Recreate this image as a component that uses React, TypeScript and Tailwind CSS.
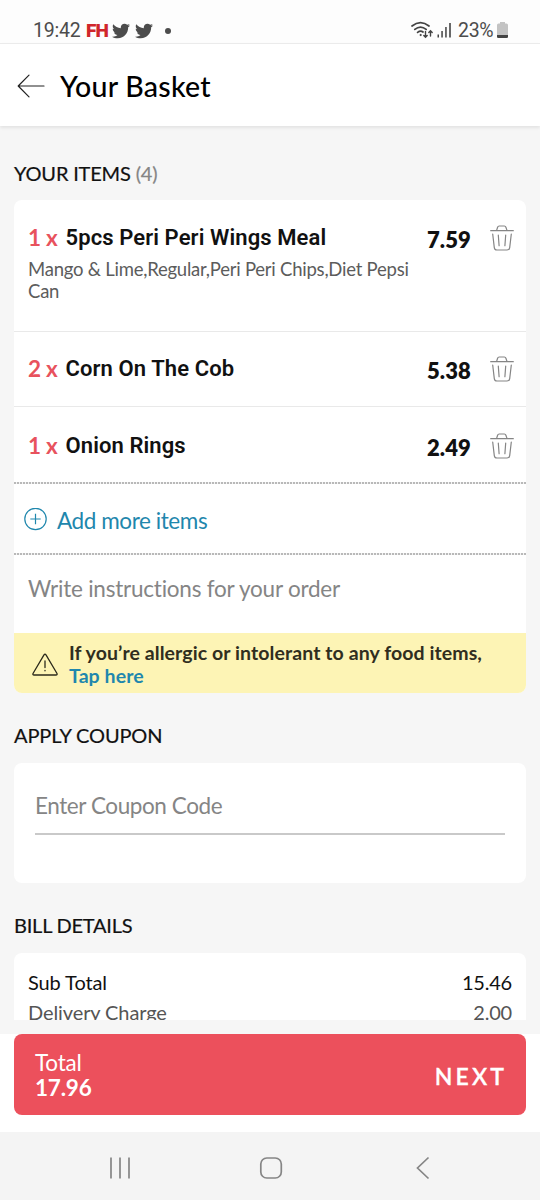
// App.tsx
import { FaTwitter } from "react-icons/fa";

const items = [
  {
    qty: 1,
    name: "5pcs Peri Peri Wings Meal",
    price: "7.59",
    desc: "Mango & Lime,Regular,Peri Peri Chips,Diet Pepsi Can",
    row: "h-[132px] border-b border-[#e9e9e9] pt-6",
  },
  { qty: 2, name: "Corn On The Cob", price: "5.38", desc: "", row: "h-[75px] border-b border-[#e9e9e9] pt-[23px]" },
  { qty: 1, name: "Onion Rings", price: "2.49", desc: "", row: "h-[75px] pt-[25px]" },
];

const TrashIcon = () => (
  <svg width="24" height="26" viewBox="0 0 24 26" fill="none" stroke="#858585" strokeWidth="1.200" strokeLinecap="round" strokeLinejoin="round">
    <path d="M0.700 5.700H23.300M6.600 5.400L7.600 2.200Q8 1 9.200 1H14.300Q15.500 1 15.900 2.200L17 5.400" />
    <path d="M2.700 9L4.300 22.600Q4.600 25 7 25H17Q19.400 25 19.700 22.600L21.300 9" />
    <path d="M8.300 10L9.100 20.700M15.700 10L14.900 20.700" />
  </svg>
);

const DottedLine = () => (
  <div className="h-[2px] bg-[repeating-linear-gradient(90deg,#b9b9b9_0_2px,#f4f4f4_2px_3px)]" />
);

function StatusBar() {
  return (
    <div className="flex h-[43px] items-start justify-between bg-[#fdfdfd] pl-[33px] pr-[32px] pt-[18px] font-[Roboto,sans-serif] text-[#4c4c4c]">
      <div className="flex h-6 items-center">
        <span className="mt-[2px] w-[53px] text-[19.500px] leading-6 tracking-[-0.2px]">19:42</span>
        <span className="mt-[2px] w-[26px] text-[19px] font-black leading-6 tracking-[-0.8px] text-[#d0262b]">FH</span>
        <FaTwitter size={18} className="mr-[5px] mt-[2px]" />
        <FaTwitter size={18} className="mt-[2px]" />
        <span className="ml-[12px] mt-px size-[6px] rounded-full bg-[#4c4c4c]" />
      </div>
      <div className="flex h-6 items-center">
        <svg width="23" height="18" viewBox="0 0 23 18" fill="none" stroke="#444" strokeWidth="1.700" strokeLinecap="round">
          <path d="M1 5Q9.500 -1.800 18 5M3.800 8.400Q9.500 3.800 15.200 8.400M6.600 11.400Q9.500 9.200 12 11" />
          <circle cx="9.500" cy="14" r="0.600" fill="#444" strokeWidth="1" />
          <path d="M14.500 10.500V16M12.800 14.500L14.500 16.300L16.200 14.500M19.500 15V10M17.800 11.500L19.500 9.800L21.200 11.500" strokeWidth="1.400" />
        </svg>
        <svg width="15" height="16" viewBox="0 0 15 16" className="ml-[3px]" fill="#444">
          <rect x="0.500" y="12.500" width="1.500" height="3" />
          <rect x="4.300" y="9" width="1.500" height="6.500" />
          <rect x="8.200" y="5" width="1.500" height="10.500" />
          <rect x="12.200" y="1" width="1.600" height="14.500" />
        </svg>
        <span className="ml-[6px] mt-[2px] w-[39px] text-[19.500px] leading-6 tracking-[-0.3px]">23%</span>
        <svg width="11" height="16" viewBox="0 0 11 16">
          <path d="M3 0H8V1.500H9.500Q11 1.500 11 3V14.500Q11 16 9.500 16H1.500Q0 16 0 14.500V3Q0 1.500 1.500 1.500H3Z" fill="#c3c3c3" />
          <path d="M0 13H11V14.500Q11 16 9.500 16H1.500Q0 16 0 14.500Z" fill="#444" />
        </svg>
      </div>
    </div>
  );
}

export default function App() {
  return (
    <div className="flex h-[1200px] w-[540px] flex-col overflow-hidden bg-[#f6f6f6] font-[Lato,sans-serif] text-[#111] [font-variant-ligatures:none]">
      <StatusBar />
      <header className="flex h-[83px] shrink-0 items-center border-t border-[#ebebeb] bg-white pl-[17px] pt-px shadow-[0_2px_3px_rgba(0,0,0,0.08)]">
        <svg width="28" height="24" viewBox="0 0 28 24" fill="none" stroke="#222" strokeWidth="1.200" strokeLinecap="round" strokeLinejoin="round">
          <path d="M27 12H1.500M12 1.200L1.200 12L12 22.800" />
        </svg>
        <h1 className="ml-[15px] mt-px text-[28.500px] font-medium leading-8 tracking-[0.25px] text-black">Your Basket</h1>
      </header>

      <main className="h-[894px] shrink-0 overflow-hidden px-[14px] pt-[35px]">
        <h2 className="text-[20px] leading-6 tracking-[-0.18px] [-webkit-text-stroke:0.2px]">
          YOUR ITEMS <span className="text-[#858585]">(4)</span>
        </h2>

        <section className="mt-[15px] h-[493px] overflow-hidden rounded-lg bg-white">
          {items.map((item) => (
            <div key={item.name} className={`flex items-start pl-[14px] pr-3 ${item.row}`}>
              <div className="w-[399px]">
                <h3 className="flex h-7 items-center">
                  <span className="w-[37.500px] text-[22.500px] font-bold leading-7 tracking-[-0.3px] text-[#e8525d]">{item.qty} x</span>
                  <span className="font-[Roboto,sans-serif] text-[22px] font-semibold leading-7 tracking-[0.1px]">{item.name}</span>
                </h3>
                {item.desc && <p className="mt-[6px] w-[390px] text-[18.500px] leading-[22px] tracking-[-0.23px] text-[#5c5c5c]">{item.desc}</p>}
              </div>
              <span className="mt-[2px] w-[63px] text-[22px] font-extrabold leading-7 tracking-[0.1px]">{item.price}</span>
              <button className="mt-[1px]">
                <TrashIcon />
              </button>
            </div>
          ))}
          <DottedLine />
          <button className="flex h-[69px] w-full items-center pl-[10px] text-[#1f87ad]">
            <svg width="24" height="24" viewBox="0 0 24 24" className="mt-[3px]" fill="none" stroke="#1f87ad" strokeWidth="1.200">
              <circle cx="11.500" cy="11" r="10.700" />
              <path d="M11.500 5.800V16.200M6.300 11H16.700" />
            </svg>
            <span className="ml-[9px] mt-[5px] text-[22.500px] leading-7 tracking-[-0.42px]">Add more items</span>
          </button>
          <DottedLine />
          <div className="h-[78px] pl-[14px] pt-5 text-[22.500px] leading-7 tracking-[-0.23px] text-[#858585]">Write instructions for your order</div>
          <div className="flex h-[60px] bg-[#fdf4b5] pl-[18px] pt-2">
            <svg width="26" height="24" viewBox="0 0 26 24" className="mt-3" fill="none" stroke="#2c2a1c" strokeWidth="1.300" strokeLinejoin="round" strokeLinecap="round">
              <path d="M12 1.800Q13 0.500 14 1.800L25 20.500Q25.500 22 24 22H2Q0.500 22 1 20.500Z" />
              <path d="M13 8V14.500M13 17.300V17.800" />
            </svg>
            <p className="ml-[11px] text-[19.500px] font-bold leading-[23px] tracking-[0.08px] text-[#302e1e]">
              If you’re allergic or intolerant to any food items,
              <br />
              <span className="text-[#1f87ad]">Tap here</span>
            </p>
          </div>
        </section>

        <h2 className="mt-[30px] text-[20px] leading-6 tracking-[-0.12px] [-webkit-text-stroke:0.2px]">APPLY COUPON</h2>
        <section className="mt-4 h-[120px] rounded-lg bg-white px-[21px] pt-[29px]">
          <div className="h-[43px] border-b-2 border-[#c9c9c9] text-[22.500px] leading-7 tracking-[-0.42px] text-[#858585]">Enter Coupon Code</div>
        </section>

        <h2 className="mt-[30px] text-[20px] leading-6 tracking-[-0.22px] [-webkit-text-stroke:0.2px]">BILL DETAILS</h2>
        <section className="mt-4 h-[67px] overflow-hidden rounded-t-lg bg-white px-[14px] pt-[17px] text-[20px] leading-6 tracking-[-0.1px]">
          <div className="flex justify-between">
            <span>Sub Total</span>
            <span className="tracking-[-0.2px]">15.46</span>
          </div>
          <div className="mt-[6px] flex justify-between text-[#555]">
            <span>Delivery Charge</span>
            <span className="tracking-[-0.2px]">2.00</span>
          </div>
        </section>
      </main>

      <div className="mt-[14px] h-[98px] shrink-0 bg-white px-[14px]">
        <button className="flex h-[81px] w-full items-center justify-between rounded-lg bg-[#ec505c] pl-[21px] pr-[19px] text-white">
          <span className="text-left text-[22.500px] leading-[25px] tracking-[-0.2px]">
            Total
            <br />
            <b>17.96</b>
          </span>
          <span className="mt-[3px] text-[23px] font-semibold leading-7 tracking-[3.100px] [-webkit-text-stroke:0.3px]">NEXT</span>
        </button>
      </div>

      <nav className="flex h-[68px] shrink-0 items-center bg-[#f4f4f4] pl-[109px] pt-1">
        <svg width="322" height="24" viewBox="0 0 322 24" fill="none" stroke="#858585" strokeWidth="1.700">
          <path d="M2 1.500V22.500M11 1.500V22.500M20 1.500V22.500" />
          <rect x="151.800" y="2" width="20.500" height="20" rx="6" />
          <path d="M319.500 1.500L308.500 12L319.500 22.500" />
        </svg>
      </nav>
    </div>
  );
}
